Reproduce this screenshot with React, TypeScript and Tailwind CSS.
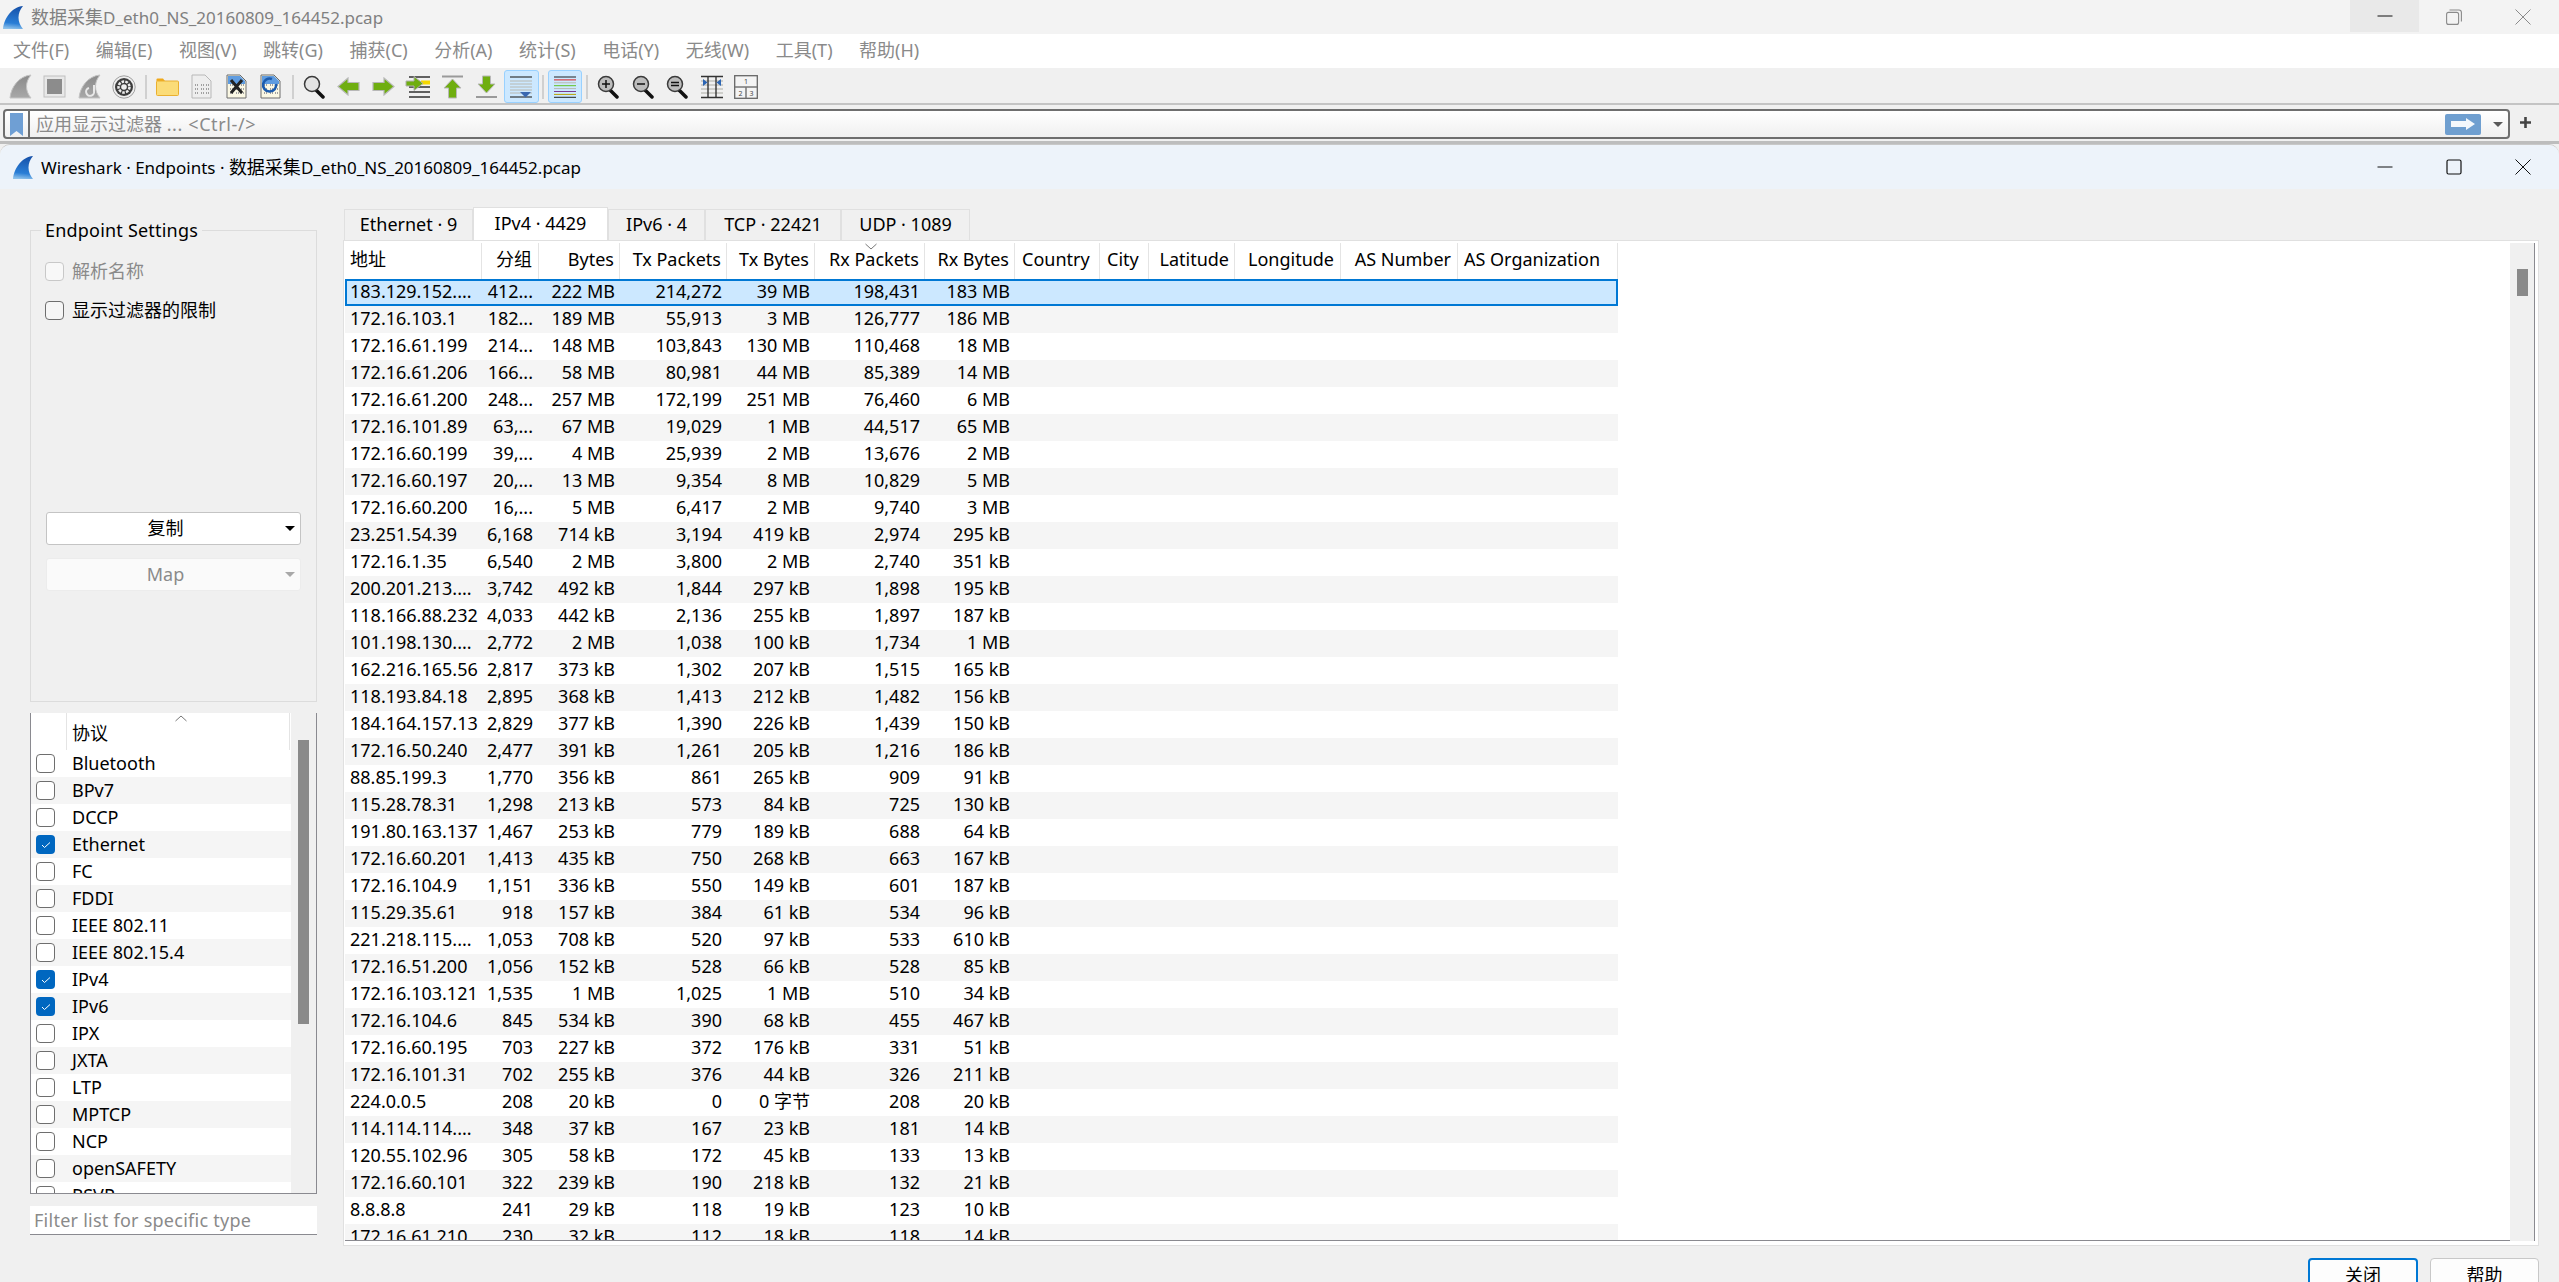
import React from 'react';

const FONT = { fontFamily: '"Noto Sans", "Noto Sans CJK SC", sans-serif' };

type Row = [string, string, string, string, string, string, string];

const rows: Row[] = [
  ['183.129.152....', '412...', '222 MB', '214,272', '39 MB', '198,431', '183 MB'],
  ['172.16.103.1', '182...', '189 MB', '55,913', '3 MB', '126,777', '186 MB'],
  ['172.16.61.199', '214...', '148 MB', '103,843', '130 MB', '110,468', '18 MB'],
  ['172.16.61.206', '166...', '58 MB', '80,981', '44 MB', '85,389', '14 MB'],
  ['172.16.61.200', '248...', '257 MB', '172,199', '251 MB', '76,460', '6 MB'],
  ['172.16.101.89', '63,...', '67 MB', '19,029', '1 MB', '44,517', '65 MB'],
  ['172.16.60.199', '39,...', '4 MB', '25,939', '2 MB', '13,676', '2 MB'],
  ['172.16.60.197', '20,...', '13 MB', '9,354', '8 MB', '10,829', '5 MB'],
  ['172.16.60.200', '16,...', '5 MB', '6,417', '2 MB', '9,740', '3 MB'],
  ['23.251.54.39', '6,168', '714 kB', '3,194', '419 kB', '2,974', '295 kB'],
  ['172.16.1.35', '6,540', '2 MB', '3,800', '2 MB', '2,740', '351 kB'],
  ['200.201.213....', '3,742', '492 kB', '1,844', '297 kB', '1,898', '195 kB'],
  ['118.166.88.232', '4,033', '442 kB', '2,136', '255 kB', '1,897', '187 kB'],
  ['101.198.130....', '2,772', '2 MB', '1,038', '100 kB', '1,734', '1 MB'],
  ['162.216.165.56', '2,817', '373 kB', '1,302', '207 kB', '1,515', '165 kB'],
  ['118.193.84.18', '2,895', '368 kB', '1,413', '212 kB', '1,482', '156 kB'],
  ['184.164.157.13', '2,829', '377 kB', '1,390', '226 kB', '1,439', '150 kB'],
  ['172.16.50.240', '2,477', '391 kB', '1,261', '205 kB', '1,216', '186 kB'],
  ['88.85.199.3', '1,770', '356 kB', '861', '265 kB', '909', '91 kB'],
  ['115.28.78.31', '1,298', '213 kB', '573', '84 kB', '725', '130 kB'],
  ['191.80.163.137', '1,467', '253 kB', '779', '189 kB', '688', '64 kB'],
  ['172.16.60.201', '1,413', '435 kB', '750', '268 kB', '663', '167 kB'],
  ['172.16.104.9', '1,151', '336 kB', '550', '149 kB', '601', '187 kB'],
  ['115.29.35.61', '918', '157 kB', '384', '61 kB', '534', '96 kB'],
  ['221.218.115....', '1,053', '708 kB', '520', '97 kB', '533', '610 kB'],
  ['172.16.51.200', '1,056', '152 kB', '528', '66 kB', '528', '85 kB'],
  ['172.16.103.121', '1,535', '1 MB', '1,025', '1 MB', '510', '34 kB'],
  ['172.16.104.6', '845', '534 kB', '390', '68 kB', '455', '467 kB'],
  ['172.16.60.195', '703', '227 kB', '372', '176 kB', '331', '51 kB'],
  ['172.16.101.31', '702', '255 kB', '376', '44 kB', '326', '211 kB'],
  ['224.0.0.5', '208', '20 kB', '0', '0 字节', '208', '20 kB'],
  ['114.114.114....', '348', '37 kB', '167', '23 kB', '181', '14 kB'],
  ['120.55.102.96', '305', '58 kB', '172', '45 kB', '133', '13 kB'],
  ['172.16.60.101', '322', '239 kB', '190', '218 kB', '132', '21 kB'],
  ['8.8.8.8', '241', '29 kB', '118', '19 kB', '123', '10 kB'],
  ['172.16.61.210', '230', '32 kB', '112', '18 kB', '118', '14 kB'],
];

// widths measured off the header separators
const columns = [
  { label: '地址', cls: 'w-[137px] pl-[5px] text-left' },
  { label: '分组', cls: 'w-[57px] pr-[6px] text-right' },
  { label: 'Bytes', cls: 'w-[81px] pr-[5px] text-right' },
  { label: 'Tx Packets', cls: 'w-[107px] pr-[5px] text-right' },
  { label: 'Tx Bytes', cls: 'w-[88px] pr-[5px] text-right' },
  { label: 'Rx Packets', cls: 'w-[110px] pr-[5px] text-right' },
  { label: 'Rx Bytes', cls: 'w-[90px] pr-[5px] text-right' },
  { label: 'Country', cls: 'w-[85px] pl-[7px] text-left' },
  { label: 'City', cls: 'w-[49px] pl-[7px] text-left' },
  { label: 'Latitude', cls: 'w-[86px] pr-[5px] text-right' },
  { label: 'Longitude', cls: 'w-[106px] pr-[6px] text-right' },
  { label: 'AS Number', cls: 'w-[117px] pr-[6px] text-right' },
  { label: 'AS Organization', cls: 'w-[160px] pl-[6px] text-left' },
];

const protocols: [string, boolean][] = [
  ['Bluetooth', false],
  ['BPv7', false],
  ['DCCP', false],
  ['Ethernet', true],
  ['FC', false],
  ['FDDI', false],
  ['IEEE 802.11', false],
  ['IEEE 802.15.4', false],
  ['IPv4', true],
  ['IPv6', true],
  ['IPX', false],
  ['JXTA', false],
  ['LTP', false],
  ['MPTCP', false],
  ['NCP', false],
  ['openSAFETY', false],
  ['RSVP', false],
];

const menus = ['文件(F)', '编辑(E)', '视图(V)', '跳转(G)', '捕获(C)', '分析(A)', '统计(S)', '电话(Y)', '无线(W)', '工具(T)', '帮助(H)'];
const tabs = [
  { label: 'Ethernet · 9', cls: 'w-[129px]' },
  { label: 'IPv4 · 4429', cls: 'w-[135px]', active: true },
  { label: 'IPv6 · 4', cls: 'w-[97px]' },
  { label: 'TCP · 22421', cls: 'w-[136px]' },
  { label: 'UDP · 1089', cls: 'w-[129px]' },
];

const Shark = ({ id = 'fin' }: { id?: string }) => (
  <svg width="22" height="25" viewBox="0 0 22 25">
    <defs>
      <linearGradient id={id} x1="0.6" y1="0" x2="0.5" y2="1">
        <stop offset="0" stopColor="#1550a8" />
        <stop offset="0.75" stopColor="#2a7ed6" />
        <stop offset="1" stopColor="#8cc0ea" />
      </linearGradient>
    </defs>
    <path d="M1 24 C2 13 10 2 21 1 C15 8 15 17 21 24 Z" fill={`url(#${id})`} />
  </svg>
);

const GrayFin = ({ reload }: { reload?: boolean }) => (
  <svg width="23" height="25" viewBox="0 0 23 25">
    <defs>
      <linearGradient id="gf" x1="0" y1="0" x2="0" y2="1">
        <stop offset="0" stopColor="#8a8a8a" />
        <stop offset="1" stopColor="#a8a8a8" />
      </linearGradient>
    </defs>
    <path d="M1 24 C2 13 10 2 22 1 C16 8 16 17 22 24 Z" fill="url(#gf)" stroke="#c4c4c4" />
    {reload && <path d="M16 11 v6 a4 4 0 1 1 -5 -3" fill="none" stroke="#e8e8e8" strokeWidth="2" />}
  </svg>
);

const StopIcon = () => (
  <svg width="23" height="23" viewBox="0 0 23 23">
    <rect x="1" y="1" width="21" height="21" fill="#e8e8e8" stroke="#c0c0c0" />
    <rect x="4" y="4" width="15" height="15" fill="#8c8c8c" />
  </svg>
);

const GearIcon = () => (
  <svg width="24" height="24" viewBox="0 0 24 24">
    <circle cx="12" cy="12" r="11.2" fill="#eee" stroke="#a0a0a0" />
    <circle cx="12" cy="12" r="9" fill="#3d3d3d" />
    <circle cx="12" cy="12" r="5.5" fill="none" stroke="#eee" strokeWidth="2.5" strokeDasharray="2.6 1.2" />
    <circle cx="12" cy="12" r="2.8" fill="#eee" />
  </svg>
);

const FolderIcon = () => (
  <svg width="23" height="18" viewBox="0 0 23 18">
    <path d="M0.5 3 V1.5 Q0.5 0.5 1.5 0.5 H7 L9 3 Z" fill="#f0a818" />
    <rect x="0.5" y="3" width="22" height="14.5" rx="1" fill="#fbdc78" stroke="#eab030" />
  </svg>
);

const FileIcon = ({ kind }: { kind: 'gray' | 'x' | 'reload' }) => (
  <svg width="21" height="25" viewBox="0 0 21 25">
    <path d="M1 1 H14 L20 7 V24 H1 Z" fill={kind === 'gray' ? '#eeeeee' : '#fbf8e4'} stroke={kind === 'gray' ? '#b8b8b8' : '#6c6c6c'} />
    {kind !== 'gray' && <path d="M2 2 H14 L19 7 V10 H2 Z" fill="#5f9ce0" />}
    {[11, 15, 19].map((y) => (
      <path key={y} d={`M4 ${y} h4 M10 ${y} h3 M15 ${y} h3`} stroke="#a0a0a0" strokeWidth="2" strokeDasharray="1 1" />
    ))}
    {kind === 'x' && <path d="M5 6 L16 19 M16 6 L5 19" stroke="#222" strokeWidth="3" />}
    {kind === 'reload' && <path d="M12 5 A6.5 6.5 0 1 0 16 10" fill="none" stroke="#1c5cae" strokeWidth="2.6" />}
  </svg>
);

const Lens = ({ mark, plain }: { mark?: '+' | '-' | '='; plain?: boolean }) => (
  <svg width="22" height="24" viewBox="0 0 22 24">
    <path d="M13 15 L20 22" stroke="#111" strokeWidth="3.5" strokeLinecap="round" />
    <circle cx="9" cy="9" r="7.5" fill={plain ? '#e4e4e4' : '#bcbcbc'} stroke="#3a3a3a" strokeWidth="1.5" />
    {mark === '+' && <path d="M5 9 h8 M9 5 v8" stroke="#111" strokeWidth="1.5" />}
    {mark === '-' && <path d="M5 9 h8" stroke="#111" strokeWidth="1.5" />}
    {mark === '=' && <path d="M5 7.5 h8 M5 10.5 h8" stroke="#111" strokeWidth="1.5" />}
  </svg>
);

const Arrow = ({ dir }: { dir: 'left' | 'right' }) => (
  <svg width="23" height="19" viewBox="0 0 23 19">
    <g transform={dir === 'left' ? 'translate(23 0) scale(-1 1)' : undefined}>
      <path d="M1 5.5 H12 V1 L22 9.5 L12 18 V13.5 H1 Z" fill="#6fae10" stroke="#b8b8b8" strokeWidth="1.2" />
    </g>
  </svg>
);

const GoToIcon = () => (
  <svg width="26" height="24" viewBox="0 0 26 24">
    {[2, 7, 12, 17, 22].map((y) => <path key={y} d={`M4 ${y} H25`} stroke="#222" strokeWidth="1.4" />)}
    <rect x="16" y="5.5" width="9" height="4" fill="#f5d800" />
    <path d="M1 6 H9 V1.5 L18 8.5 L9 15.5 V11 H1 Z" fill="#6fae10" stroke="#b0b0b0" />
  </svg>
);

const TopIcon = () => (
  <svg width="23" height="24" viewBox="0 0 23 24">
    <path d="M1 1.5 H22" stroke="#9a9a9a" strokeWidth="2" />
    <path d="M11.5 4 L20 13 H15.5 V23 H7.5 V13 H3 Z" fill="#6fae10" stroke="#b8b8b8" />
  </svg>
);

const BottomIcon = () => (
  <svg width="23" height="24" viewBox="0 0 23 24">
    <path d="M7.5 1 H15.5 V9 H20 L11.5 18 L3 9 H7.5 Z" fill="#6fae10" stroke="#b8b8b8" />
    <path d="M1 22 H22" stroke="#9a9a9a" strokeWidth="2" />
  </svg>
);

const AutoScroll = () => (
  <svg width="22" height="22" viewBox="0 0 22 22">
    <path d="M0 1 H22" stroke="#333" strokeWidth="1.2" />
    {[5, 8, 11, 14, 17].map((y) => <path key={y} d={`M0 ${y} H22`} stroke="#b8b8b0" strokeWidth="1" />)}
    <path d="M0 21 H22" stroke="#333" strokeWidth="1.2" />
    <path d="M10 16 H21 L15.5 21.5 Z" fill="#3a68b0" />
  </svg>
);

const Colorize = () => (
  <svg width="22" height="22" viewBox="0 0 22 22">
    {['#222', '#d82020', '#b8b8b0', '#60c020', '#b8b8b0', '#7a3a90', '#b8a000', '#222'].map((c, i) => (
      <path key={i} d={`M0 ${1 + i * 2.9} H22`} stroke={c} strokeWidth="1" />
    ))}
  </svg>
);

const ResizeCols = () => (
  <svg width="24" height="24" viewBox="0 0 24 24">
    <path d="M1 1.5 H23 M1 22.5 H23" stroke="#333" strokeWidth="1.4" />
    {[6, 10, 14, 18].map((y) => <path key={y} d={`M1 ${y} H23`} stroke="#b8b8b0" strokeWidth="1.2" />)}
    <path d="M8 1 V23 M16 1 V23" stroke="#333" strokeWidth="1.4" />
    <path d="M3 4 L7.5 7.5 L3 11 Z M21 4 L16.5 7.5 L21 11 Z" fill="#2d66b4" />
  </svg>
);

const LayoutIcon = () => (
  <svg width="24" height="24" viewBox="0 0 24 24" fontSize="7" fontFamily="Noto Sans" fill="#444" textAnchor="middle">
    <rect x="0.7" y="0.7" width="22.6" height="22.6" fill="#f4f4f4" stroke="#666" strokeWidth="1.3" />
    <path d="M1 12 H23 M12 12 V23" stroke="#777" strokeWidth="1.5" />
    <text x="12" y="9">1</text>
    <text x="6.5" y="20.5">2</text>
    <text x="17.5" y="20.5">3</text>
  </svg>
);

const Slot = ({ children }: { children: React.ReactNode }) => (
  <div className="flex h-[36px] w-[34.5px] items-center justify-center">{children}</div>
);
const Pressed = ({ children }: { children: React.ReactNode }) => (
  <div className="flex h-[33px] w-[34.5px] items-center justify-center rounded-[3px] border border-[#99d1ff] bg-[#cce8ff]">{children}</div>
);
const ToolSep = ({ w = 'w-[9px]' }: { w?: string }) => (
  <div className={`flex h-[36px] ${w} items-center justify-center`}>
    <div className="h-[24px] w-[2px] bg-[#d0d0d0]" />
  </div>
);

const Check = ({ checked, disabled, dark }: { checked?: boolean; disabled?: boolean; dark?: boolean }) =>
  checked ? (
    <div className="flex h-[19px] w-[19px] shrink-0 items-center justify-center rounded-[4px] bg-[#0067c0]">
      <svg width="10" height="8" viewBox="0 0 10 8">
        <path d="M1 4 L3.5 6.5 L9 1.5" fill="none" stroke="#fff" strokeWidth="1" />
      </svg>
    </div>
  ) : (
    <div
      className={`h-[19px] w-[19px] shrink-0 rounded-[4px] border ${
        disabled ? 'border-[#c8c8c8] bg-[#f8f8f8]' : dark ? 'border-[#6e6e6e] bg-[#f6f6f6]' : 'border-[#6e6e6e] bg-white'
      }`}
    />
  );

const Caret = ({ color = 'border-t-black' }: { color?: string }) => (
  <div className={`h-0 w-0 border-x-[5px] border-t-[5px] border-x-transparent ${color}`} />
);

const WinControls = ({ dim }: { dim?: boolean }) => (
  <div className="flex h-full items-stretch">
    <div className={`flex w-[69px] items-center justify-center ${dim ? 'h-[32px] bg-[#e9e9e9]' : ''}`}>
      <svg width="16" height="16" viewBox="0 0 16 16"><path d="M0.5 8 H15.5" stroke="#111" strokeWidth="1" /></svg>
    </div>
    <div className="flex w-[69px] items-center justify-center">
      {dim ? (
        <svg width="16" height="16" viewBox="0 0 16 16" fill="none" stroke="#8a8a8a" strokeWidth="1.1">
          <rect x="0.6" y="3.4" width="12" height="12" rx="2" />
          <path d="M3.5 1 H13 Q15.4 1 15.4 3.4 V12.5" />
        </svg>
      ) : (
        <svg width="16" height="16" viewBox="0 0 16 16" fill="none" stroke="#111" strokeWidth="1.2">
          <rect x="1" y="1" width="14" height="14" rx="1.5" />
        </svg>
      )}
    </div>
    <div className="flex w-[69px] items-center justify-center">
      <svg width="16" height="16" viewBox="0 0 16 16">
        <path d="M0.5 0.5 L15.5 15.5 M15.5 0.5 L0.5 15.5" stroke={dim ? '#8a8a8a' : '#111'} strokeWidth="1" />
      </svg>
    </div>
  </div>
);

const ProtocolPanel = () => (
  <div className="mt-[11px] flex h-[481px] w-[287px] border-x border-b border-[#8a8a90] bg-white">
    <div className="min-w-0 flex-1 overflow-hidden">
      <div className="relative flex h-[37px]">
        <div className="w-[36px] border-r border-[#e4e4e4]" />
        <div className="w-[223px] border-r border-[#e4e4e4] pl-[5px] pt-[5px] leading-[30px]">协议</div>
        <svg className="absolute left-[144px] top-[2px]" width="12" height="7" viewBox="0 0 12 7">
          <path d="M0.5 6 L6 1 L11.5 6" fill="none" stroke="#777" />
        </svg>
      </div>
      {protocols.map(([name, on], i) => (
        <div key={name} className={`flex h-[27px] items-center ${i % 2 === 1 ? 'bg-[#f5f5f5]' : 'bg-white'}`}>
          <div className="ml-[5px] mr-[17px]">
            <Check checked={on} />
          </div>
          <span className="leading-[27px]">{name}</span>
        </div>
      ))}
    </div>
    <div className="w-[25px] shrink-0 bg-[#f0f0f0] pl-[7px] pt-[27px]">
      <div className="h-[284px] w-[11px] bg-[#8a8a8a]" />
    </div>
  </div>
);

const EndpointTable = () => (
  <div className="flex min-h-0 flex-1">
    <div className="min-w-0 flex-1 overflow-hidden border-b border-[#8a8a90] bg-white">
      <div className="relative flex h-[36px] w-[1273px]">
        {columns.map((c) => (
          <div key={c.label} className={`${c.cls} h-full shrink-0 border-r border-[#e4e4e4] leading-[33px]`}>
            {c.label}
          </div>
        ))}
        <svg className="absolute left-[520px] top-[0px]" width="12" height="7" viewBox="0 0 12 7">
          <path d="M0.5 1 L6 6 L11.5 1" fill="none" stroke="#777" />
        </svg>
      </div>
      {rows.map((r, i) => (
        <div
          key={r[0]}
          className={`flex h-[27px] w-[1273px] leading-[25px] ${
            i === 0 ? 'bg-[#cce8ff] ring-2 ring-inset ring-[#0078d4]' : i % 2 === 1 ? 'bg-[#f5f5f5]' : 'bg-white'
          }`}
        >
          {r.map((cell, j) => (
            <div key={j} className={`${columns[j].cls} shrink-0 whitespace-nowrap`}>
              {cell}
            </div>
          ))}
        </div>
      ))}
    </div>
    <div className="w-[25px] shrink-0 border-r border-[#8a8a90] bg-[#f0f0f0] pl-[7px] pt-[26px]">
      <div className="h-[27px] w-[11px] bg-[#8a8a8a]" />
    </div>
  </div>
);

export default function App() {
  return (
    <div className="flex h-[1282px] w-[2559px] flex-col overflow-hidden bg-[#f0f0f0] text-[18px] text-black" style={FONT}>
      {/* main window */}
      <div className="flex h-[34px] shrink-0 items-center justify-between bg-[#f3f3f3]">
        <div className="flex items-center text-[#808080]">
          <div className="ml-[2px] mr-[7px]"><Shark id="fin-main" /></div>
          <span className="pt-[1px]">数据采集<span className="text-[17px]">D_eth0_NS_20160809_164452.pcap</span></span>
        </div>
        <div className="mr-[2px] h-full"><WinControls dim /></div>
      </div>

      <div className="flex h-[32px] shrink-0 items-center gap-[26.5px] bg-white pl-[13px] text-[#8a8a8a]">
        {menus.map((m) => <span key={m}>{m}</span>)}
      </div>

      <div className="flex h-[39px] shrink-0 items-center border-b-2 border-t-2 border-[#c4c4c4] border-t-white bg-[#f0f0f0] pl-[3px] pt-[2px]">
        <Slot><GrayFin /></Slot>
        <Slot><StopIcon /></Slot>
        <Slot><GrayFin reload /></Slot>
        <Slot><GearIcon /></Slot>
        <ToolSep />
        <Slot><FolderIcon /></Slot>
        <Slot><FileIcon kind="gray" /></Slot>
        <Slot><FileIcon kind="x" /></Slot>
        <Slot><FileIcon kind="reload" /></Slot>
        <ToolSep />
        <Slot><Lens plain /></Slot>
        <Slot><Arrow dir="left" /></Slot>
        <Slot><Arrow dir="right" /></Slot>
        <Slot><GoToIcon /></Slot>
        <Slot><TopIcon /></Slot>
        <Slot><BottomIcon /></Slot>
        <Pressed><AutoScroll /></Pressed>
        <ToolSep />
        <Pressed><Colorize /></Pressed>
        <ToolSep />
        <Slot><Lens mark="+" /></Slot>
        <Slot><Lens mark="-" /></Slot>
        <Slot><Lens mark="=" /></Slot>
        <Slot><ResizeCols /></Slot>
        <Slot><LayoutIcon /></Slot>
      </div>

      <div className="flex h-[36px] shrink-0 items-start bg-[#f0f0f0] pl-[3px] pt-[4px]">
        <div className="flex h-[30px] w-[2507px] items-center rounded-[4px] border-2 border-[#6e6e6e] bg-gradient-to-b from-white to-[#f0f0f0]">
          <div className="flex h-full w-[25px] items-center justify-center border-r-2 border-[#6e6e6e]">
            <svg width="13" height="23" viewBox="0 0 13 23"><path d="M0 0 H13 V23 L6.5 18 L0 23 Z" fill="#6f9fd4" /></svg>
          </div>
          <span className="ml-[6px] flex-1 text-[#8a8a8a]">应用显示过滤器 <span className="tracking-[0.6px]">... &lt;Ctrl-/&gt;</span></span>
          <div className="flex h-[21px] w-[36px] items-center justify-center rounded-[2px] bg-[#6f9fd0]">
            <svg width="26" height="14" viewBox="0 0 26 14"><path d="M1 4 H16 V1 L25 7 L16 13 V10 H1 Z" fill="#f4f8fc" /></svg>
          </div>
          <div className="ml-[12px] mr-[5px]"><Caret color="border-t-[#5a5a5a]" /></div>
        </div>
        <svg className="ml-[9px] mt-[7px]" width="13" height="13" viewBox="0 0 13 13">
          <path d="M6.5 1 V12 M1 6.5 H12" stroke="#444" strokeWidth="2.6" />
        </svg>
      </div>

      <div className="h-[3px] shrink-0 bg-[#bdbdbd]" />

      {/* Endpoints dialog */}
      <div className="flex min-h-0 flex-1 flex-col rounded-t-[10px] border-t border-[#c8c8c8] bg-[#f0f0f0]">
        <div className="flex h-[44px] shrink-0 items-center justify-between rounded-t-[10px] bg-[#edf3fa]">
          <div className="flex items-center">
            <div className="ml-[12px] mr-[7px]"><Shark id="fin-dialog" /></div>
            <span><span className="text-[17px]">Wireshark · Endpoints · </span>数据采集<span className="text-[17px]">D_eth0_NS_20160809_164452.pcap</span></span>
          </div>
          <div className="mr-[2px] h-full"><WinControls /></div>
        </div>

        <div className="flex min-h-0 flex-1">
          <div className="w-[343px] shrink-0 pl-[30px] pt-[41px]">
            <div className="flex h-[472px] w-[287px] flex-col border border-[#dcdcdc]">
              <div className="-mt-[13px] ml-[10px] w-fit bg-[#f0f0f0] px-[4px] leading-[24px] tracking-[0.2px]">Endpoint Settings</div>
              <div className="ml-[14px] mt-[17px] flex h-[24px] items-center gap-[8px] text-[#8a8a8a]">
                <Check disabled />
                <span>解析名称</span>
              </div>
              <div className="ml-[14px] mt-[15px] flex h-[24px] items-center gap-[8px]">
                <Check dark />
                <span>显示过滤器的限制</span>
              </div>
              <div className="ml-[15px] mt-auto flex h-[33px] w-[255px] items-center justify-center rounded-[3px] border border-[#c4c4c4] bg-white">
                <span className="-ml-[16px]">复制</span>
                <div className="absolute ml-[233px]"><Caret /></div>
              </div>
              <div className="mb-[110px] ml-[15px] mt-[13px] flex h-[33px] w-[255px] items-center justify-center rounded-[3px] border border-[#ececec] bg-[#fafafa] text-[#8a8a8a]">
                <span className="-ml-[16px]">Map</span>
                <div className="absolute ml-[233px]"><Caret color="border-t-[#a8a8a8]" /></div>
              </div>
            </div>
            <ProtocolPanel />
            <div className="mt-[12px] flex h-[29px] w-[287px] items-center border-b border-[#8a8a90] bg-white pl-[4px] tracking-[0.25px] text-[#8a8a8a]">
              Filter list for specific type
            </div>
          </div>

          <div className="flex min-w-0 flex-1 flex-col pr-[20px] pt-[18px]">
            <div className="flex h-[33px] shrink-0 items-end pl-[1px]">
              {tabs.map((t) => (
                <div
                  key={t.label}
                  className={`${t.cls} flex items-center justify-center border-x border-t border-[#e0e0e0] pb-[2px] ${
                    t.active ? 'h-[33px] bg-white' : 'h-[31px] bg-[#f0f0f0]'
                  }`}
                >
                  {t.label}
                </div>
              ))}
            </div>
            <div className="flex h-[1006px] shrink-0 flex-col border border-[#e0e0e0] bg-white pb-[4px] pl-[1px] pr-[3px] pt-[2px]">
              <EndpointTable />
            </div>
            <div className="mt-[12px] flex shrink-0 justify-end gap-[12px]">
              <div className="flex h-[34px] w-[110px] items-center justify-center rounded-[4px] border-2 border-[#0078d4] bg-[#fdfdfd]">关闭</div>
              <div className="flex h-[34px] w-[109px] items-center justify-center rounded-[4px] border border-[#c8c8c8] bg-[#fdfdfd]">帮助</div>
            </div>
          </div>
        </div>
      </div>
    </div>
  );
}
